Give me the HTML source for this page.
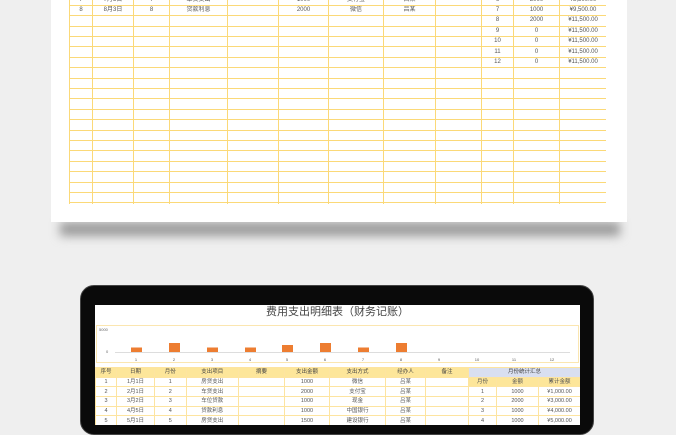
<!DOCTYPE html><html><head><meta charset="utf-8"><style>
*{margin:0;padding:0;box-sizing:border-box}
body{width:676px;height:418px;overflow:hidden;background:#efefef;position:relative;font-family:"Liberation Sans","Noto Sans CJK SC",sans-serif;color:#555}
.abs{position:absolute}
table{border-collapse:collapse;table-layout:fixed;position:absolute}
td{border:1px solid #fbd978;text-align:center;white-space:nowrap;overflow:hidden;padding:0}
#t1 td{height:10.4px;font-size:6px;line-height:9px}
#t2 td{height:9.7px;font-size:5.5px;line-height:8px;border-color:#fde4a0}
.hd td{background:#fde69a;color:#444}
.sub{background:#fde69a}
.blue{background:#d9dff0!important}
</style></head><body>
<div class="abs" style="left:60px;top:222px;width:560px;height:14px;background:#9a9a9a;filter:blur(5px)"></div>
<div class="abs" style="left:51px;top:0;width:576px;height:222px;background:#fff"></div>
<div class="abs" style="left:69px;top:-5.5px;width:537px;height:209.5px;overflow:hidden">
<table id="t1" style="left:0;top:0;width:537px">
<colgroup><col style="width:23px"><col style="width:41px"><col style="width:36px"><col style="width:58px"><col style="width:51px"><col style="width:50px"><col style="width:55px"><col style="width:52px"><col style="width:46px"><col style="width:32px"><col style="width:46px"><col style="width:47px"></colgroup>
<tr><td>7</td><td>7月5日</td><td>7</td><td>车贷支出</td><td></td><td>1000</td><td>支付宝</td><td>吕某</td><td></td><td>6</td><td>2000</td><td>¥8,500.00</td></tr>
<tr><td>8</td><td>8月3日</td><td>8</td><td>贷款利息</td><td></td><td>2000</td><td>微信</td><td>吕某</td><td></td><td>7</td><td>1000</td><td>¥9,500.00</td></tr>
<tr><td></td><td></td><td></td><td></td><td></td><td></td><td></td><td></td><td></td><td>8</td><td>2000</td><td>¥11,500.00</td></tr>
<tr><td></td><td></td><td></td><td></td><td></td><td></td><td></td><td></td><td></td><td>9</td><td>0</td><td>¥11,500.00</td></tr>
<tr><td></td><td></td><td></td><td></td><td></td><td></td><td></td><td></td><td></td><td>10</td><td>0</td><td>¥11,500.00</td></tr>
<tr><td></td><td></td><td></td><td></td><td></td><td></td><td></td><td></td><td></td><td>11</td><td>0</td><td>¥11,500.00</td></tr>
<tr><td></td><td></td><td></td><td></td><td></td><td></td><td></td><td></td><td></td><td>12</td><td>0</td><td>¥11,500.00</td></tr>
<tr><td></td><td></td><td></td><td></td><td></td><td></td><td></td><td></td><td></td><td></td><td></td><td></td></tr>
<tr><td></td><td></td><td></td><td></td><td></td><td></td><td></td><td></td><td></td><td></td><td></td><td></td></tr>
<tr><td></td><td></td><td></td><td></td><td></td><td></td><td></td><td></td><td></td><td></td><td></td><td></td></tr>
<tr><td></td><td></td><td></td><td></td><td></td><td></td><td></td><td></td><td></td><td></td><td></td><td></td></tr>
<tr><td></td><td></td><td></td><td></td><td></td><td></td><td></td><td></td><td></td><td></td><td></td><td></td></tr>
<tr><td></td><td></td><td></td><td></td><td></td><td></td><td></td><td></td><td></td><td></td><td></td><td></td></tr>
<tr><td></td><td></td><td></td><td></td><td></td><td></td><td></td><td></td><td></td><td></td><td></td><td></td></tr>
<tr><td></td><td></td><td></td><td></td><td></td><td></td><td></td><td></td><td></td><td></td><td></td><td></td></tr>
<tr><td></td><td></td><td></td><td></td><td></td><td></td><td></td><td></td><td></td><td></td><td></td><td></td></tr>
<tr><td></td><td></td><td></td><td></td><td></td><td></td><td></td><td></td><td></td><td></td><td></td><td></td></tr>
<tr><td></td><td></td><td></td><td></td><td></td><td></td><td></td><td></td><td></td><td></td><td></td><td></td></tr>
<tr><td></td><td></td><td></td><td></td><td></td><td></td><td></td><td></td><td></td><td></td><td></td><td></td></tr>
<tr><td></td><td></td><td></td><td></td><td></td><td></td><td></td><td></td><td></td><td></td><td></td><td></td></tr>
<tr><td></td><td></td><td></td><td></td><td></td><td></td><td></td><td></td><td></td><td></td><td></td><td></td></tr>
</table></div>

<div class="abs" style="left:80px;top:285px;width:514px;height:150px;background:#0a0a0a;border-radius:14px;border:1px solid #444"></div>
<div class="abs" style="left:95px;top:305px;width:485px;height:120px;background:#fff;overflow:hidden">
<div class="abs" style="left:0;top:0;width:485px;text-align:center;font-size:11px;line-height:15px;color:#444">费用支出明细表（财务记账）</div>
<div class="abs" style="left:1px;top:20px;width:483px;height:38px;border:1px solid #fbe6b0"></div>
<div class="abs" style="left:4px;top:22px;font-size:4px;color:#666">5000</div>
<div class="abs" style="left:11px;top:44px;font-size:4px;color:#666">0</div>
<div class="abs" style="left:20px;top:47px;width:455px;height:1px;background:#ddd"></div>
<svg class="abs" style="left:0;top:0" width="485" height="62">
<g fill="#ed7d31"><rect x="36" y="42.5" width="11" height="4.5"/><rect x="74" y="38" width="11" height="9"/><rect x="112" y="42.5" width="11" height="4.5"/><rect x="150" y="42.5" width="11" height="4.5"/><rect x="187" y="40" width="11" height="7"/><rect x="225" y="38" width="11" height="9"/><rect x="263" y="42.5" width="11" height="4.5"/><rect x="301" y="38" width="11" height="9"/></g>
<g font-size="4" fill="#555" text-anchor="middle" font-family="Liberation Sans"><text x="41" y="56">1</text><text x="79" y="56">2</text><text x="117" y="56">3</text><text x="155" y="56">4</text><text x="192" y="56">5</text><text x="230" y="56">6</text><text x="268" y="56">7</text><text x="306" y="56">8</text><text x="344" y="56">9</text><text x="382" y="56">10</text><text x="419" y="56">11</text><text x="457" y="56">12</text></g></svg>
<table id="t2" style="left:0;top:62px;width:485px">
<colgroup><col style="width:21px"><col style="width:38px"><col style="width:31.5px"><col style="width:52.5px"><col style="width:46px"><col style="width:45px"><col style="width:56px"><col style="width:40px"><col style="width:43px"><col style="width:28px"><col style="width:42px"><col style="width:42px"></colgroup>
<tr class="hd"><td>序号</td><td>日期</td><td>月份</td><td>支出项目</td><td>摘要</td><td>支出金额</td><td>支出方式</td><td>经办人</td><td>备注</td><td colspan="3" class="blue">月份统计汇总</td></tr>
<tr><td>1</td><td>1月1日</td><td>1</td><td>房贷支出</td><td></td><td>1000</td><td>微信</td><td>吕某</td><td></td><td class="sub">月份</td><td class="sub">金额</td><td class="sub">累计金额</td></tr>
<tr><td>2</td><td>2月1日</td><td>2</td><td>车贷支出</td><td></td><td>2000</td><td>支付宝</td><td>吕某</td><td></td><td>1</td><td>1000</td><td>¥1,000.00</td></tr>
<tr><td>3</td><td>3月2日</td><td>3</td><td>车位贷款</td><td></td><td>1000</td><td>现金</td><td>吕某</td><td></td><td>2</td><td>2000</td><td>¥3,000.00</td></tr>
<tr><td>4</td><td>4月5日</td><td>4</td><td>贷款利息</td><td></td><td>1000</td><td>中国银行</td><td>吕某</td><td></td><td>3</td><td>1000</td><td>¥4,000.00</td></tr>
<tr><td>5</td><td>5月1日</td><td>5</td><td>房贷支出</td><td></td><td>1500</td><td>建设银行</td><td>吕某</td><td></td><td>4</td><td>1000</td><td>¥5,000.00</td></tr>
</table>
</div>
</body></html>
